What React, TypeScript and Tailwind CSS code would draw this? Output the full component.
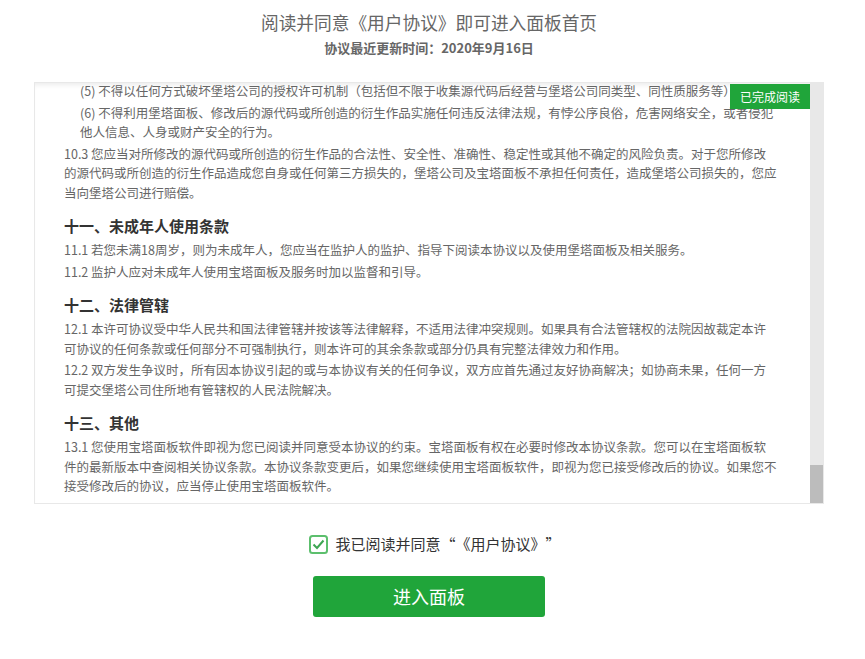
const font = { fontFamily: '"Noto Sans CJK SC", "Microsoft YaHei", sans-serif' }

function Para({ lines, item }: { lines: string[]; item?: boolean }) {
  return (
    <p className={`mt-[2px] leading-[19.5px] text-[12.5px] text-[#666] ${item ? 'pl-[16px]' : ''}`}>
      {lines.map((l, i) => (
        <span key={i} className="block">{l}</span>
      ))}
    </p>
  )
}

function Heading({ children }: { children: string }) {
  return <h3 className="mt-[12px] leading-[24px] text-[15px] font-bold text-[#333]">{children}</h3>
}

export default function App() {
  return (
    <div className="w-[858px] bg-white" style={font}>
      <h1 className="pt-[10px] text-center text-[17.7px] leading-[24px] text-[#666]">
        阅读并同意《用户协议》即可进入面板首页
      </h1>
      <div className="mt-[2px] text-center text-[13px] leading-[24px] font-bold text-[#666]">
        协议最近更新时间：2020年9月16日
      </div>

      {/* agreement box */}
      <div className="mx-auto mt-[22px] flex h-[422px] w-[790px] border border-[#e8e8e8] shadow-[inset_0_5px_5px_-3px_rgba(0,0,0,0.08)]">
        <div className="relative flex-1 overflow-hidden whitespace-nowrap pl-[29px]">
          <div className="-mt-[4px]">
            <Para item lines={['(5) 不得以任何方式破坏堡塔公司的授权许可机制（包括但不限于收集源代码后经营与堡塔公司同类型、同性质服务等）']} />
            <Para item lines={[
              '(6) 不得利用堡塔面板、修改后的源代码或所创造的衍生作品实施任何违反法律法规，有悖公序良俗，危害网络安全，或者侵犯',
              '他人信息、人身或财产安全的行为。',
            ]} />
            <Para lines={[
              '10.3 您应当对所修改的源代码或所创造的衍生作品的合法性、安全性、准确性、稳定性或其他不确定的风险负责。对于您所修改',
              '的源代码或所创造的衍生作品造成您自身或任何第三方损失的，堡塔公司及宝塔面板不承担任何责任，造成堡塔公司损失的，您应',
              '当向堡塔公司进行赔偿。',
            ]} />

            <Heading>十一、未成年人使用条款</Heading>
            <Para lines={['11.1 若您未满18周岁，则为未成年人，您应当在监护人的监护、指导下阅读本协议以及使用堡塔面板及相关服务。']} />
            <Para lines={['11.2 监护人应对未成年人使用宝塔面板及服务时加以监督和引导。']} />

            <Heading>十二、法律管辖</Heading>
            <Para lines={[
              '12.1 本许可协议受中华人民共和国法律管辖并按该等法律解释，不适用法律冲突规则。如果具有合法管辖权的法院因故裁定本许',
              '可协议的任何条款或任何部分不可强制执行，则本许可的其余条款或部分仍具有完整法律效力和作用。',
            ]} />
            <Para lines={[
              '12.2 双方发生争议时，所有因本协议引起的或与本协议有关的任何争议，双方应首先通过友好协商解决；如协商未果，任何一方',
              '可提交堡塔公司住所地有管辖权的人民法院解决。',
            ]} />

            <Heading>十三、其他</Heading>
            <Para lines={[
              '13.1 您使用宝塔面板软件即视为您已阅读并同意受本协议的约束。宝塔面板有权在必要时修改本协议条款。您可以在宝塔面板软',
              '件的最新版本中查阅相关协议条款。本协议条款变更后，如果您继续使用宝塔面板软件，即视为您已接受修改后的协议。如果您不',
              '接受修改后的协议，应当停止使用宝塔面板软件。',
            ]} />
          </div>

          <div className="absolute right-0 top-[1px] flex h-[25px] w-[80px] items-center justify-center bg-[#20a53a] text-[12px] text-white">
            已完成阅读
          </div>
        </div>

        {/* scrollbar */}
        <div className="flex w-[13px] flex-col justify-end bg-[#e8e8e8]">
          <div className="h-[38px] bg-[#bcbcbc]" />
        </div>
      </div>

      <div className="mt-[30px] flex items-center justify-center gap-[7px] pl-[12px]">
        <svg width="19" height="19" viewBox="0 0 19 19">
          <rect x="1" y="1" width="17" height="17" rx="2.5" fill="white" stroke="#5cbf6d" strokeWidth="2" />
          <path d="M4.5 9.5 L8 13 L14.5 5.5" fill="none" stroke="#3ea653" strokeWidth="2" />
        </svg>
        <span className="text-[15px] leading-[20px] text-[#333]">
          我已阅读并同意<span className="inline-block w-[1em] text-center">“</span>《用户协议》<span className="inline-block w-[1em] text-center">”</span>
        </span>
      </div>

      <div className="mt-[22px] flex justify-center">
        <button className="h-[41px] w-[232px] rounded-[3px] bg-[#20a53a] text-[18px] text-white">
          进入面板
        </button>
      </div>
    </div>
  )
}
